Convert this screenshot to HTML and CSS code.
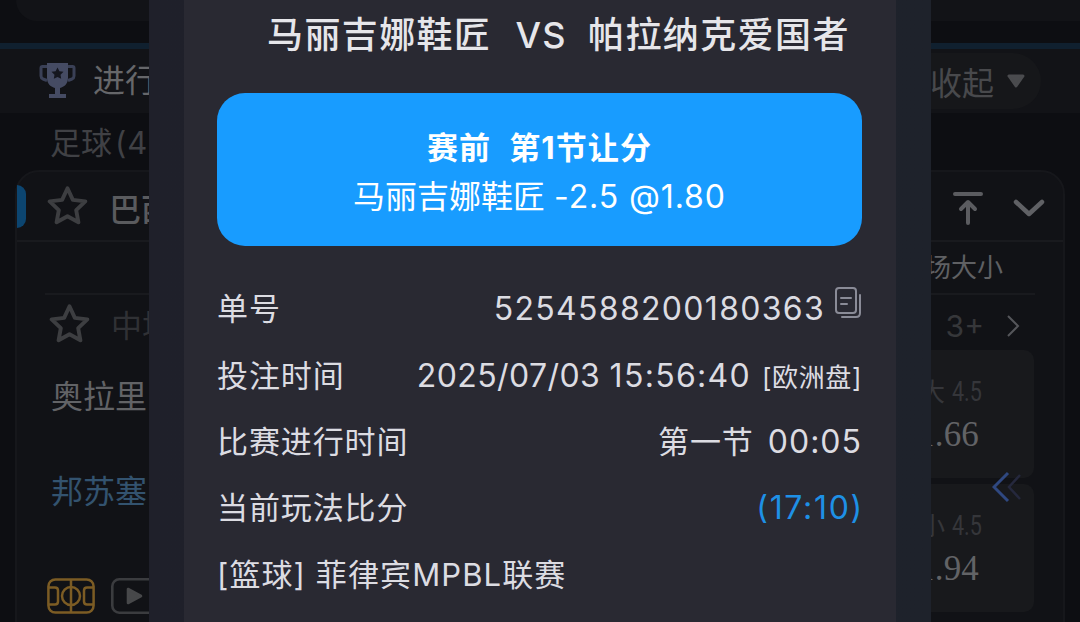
FILE: index.html
```html
<!DOCTYPE html>
<html lang="zh-CN">
  <head>
    <meta charset="UTF-8">
    <meta name="viewport" content="width=device-width, initial-scale=1.0">
    <title>注单详情</title>
    <link rel="stylesheet" href="styles.css">
  </head>
  <body>
    <div class="page">
      <div class="topbar"></div>
      <div class="section">
        <svg class="trophy" viewBox="0 0 38 38">
          <path d="M9 1h21v15c0 6-4 9-8 10v6h6v4H11v-4h6v-6c-4-1-8-4-8-10z" fill="#454b63"/>
          <path d="M9 4.500H4.500q-1.500 0-1.500 1.500v8q0 2 2 3l4 1.500M30 4.500h4.500q1.500 0 1.500 1.500v8q0 2-2 3l-4 1.500" fill="none" stroke="#3a4056" stroke-width="3"/>
          <path d="M19.500 5.500l1.900 3.700 4.100.6-3 2.900.7 4.100-3.700-1.900-3.700 1.900.7-4.100-3-2.900 4.100-.6z" fill="#15171f"/>
        </svg>
        <span class="section__title">进行</span>
        <div class="fold">收起
          <svg class="fold__arrow" viewBox="0 0 20 15"><path d="M3 2h14l-7 10z" fill="#4a4b4e" stroke="#4a4b4e" stroke-width="3" stroke-linejoin="round"/></svg>
        </div>
      </div>
      <div class="sport">足球<span class="sport__count">(4</span></div>

      <div class="card">
        <div class="league">
          <span class="league__mark"></span>
          <svg class="star" viewBox="2 2 36 35"><path d="M20 4l4.800 10.400 11.200 1.400-8.200 7.800 2 11L20 29.200 10.200 34.600l2-11L4 15.800l11.200-1.400z"/></svg>
          <span class="league__name">巴西</span>
          <div class="league__tools">
            <svg width="32" height="36" viewBox="0 0 32 36"><path d="M3 4h26M16 33V13M9 19l7-7 7 7" fill="none" stroke="#5b5c60" stroke-width="4" stroke-linecap="round" stroke-linejoin="round"/></svg>
            <svg width="32" height="20" viewBox="0 0 32 20"><path d="M3 4l13 12L29 4" fill="none" stroke="#606165" stroke-width="4.500" stroke-linecap="round" stroke-linejoin="round"/></svg>
          </div>
        </div>

        <div class="market">场大小</div>

        <div class="status">
          <svg class="star" viewBox="2 2 36 35"><path d="M20 4l4.800 10.400 11.200 1.400-8.200 7.800 2 11L20 29.200 10.200 34.600l2-11L4 15.800l11.200-1.400z"/></svg>
          <span class="status__time">中场</span>
          <span class="status__more">3+</span>
          <svg width="14" height="24" viewBox="0 0 14 24"><path d="M2 2l10 10L2 22" fill="none" stroke="#55565a" stroke-width="2"/></svg>
        </div>

        <div class="match">
          <div class="teams">
            <div class="team">奥拉里</div>
            <div class="team team--blue">邦苏塞</div>
            <div class="teams__icons">
              <svg width="48" height="36" viewBox="0 0 48 36" fill="none" stroke="#7c5c24" stroke-width="2.500">
                <rect x="1.400" y="1.400" width="45.200" height="33.200" rx="7"/>
                <path d="M24 1v34M2 9.500h6q3 0 3 3v11q0 3-3 3H2M46 9.500h-6q-3 0-3 3v11q0 3 3 3h6"/>
                <circle cx="24" cy="18" r="9"/>
              </svg>
              <svg width="48" height="36" viewBox="0 0 48 36" fill="none" stroke="#3b3c3f" stroke-width="2.600">
                <rect x="1.300" y="1.300" width="45.400" height="33.400" rx="7"/>
                <path d="M17 11v14l13-7z" fill="#47484a" stroke="#47484a" stroke-linejoin="round"/>
              </svg>
            </div>
          </div>
          <div class="odds">
            <div class="odd">
              <div class="odd__line">大 <span class="odd__num">4.5</span></div>
              <div class="odd__price">1.66</div>
            </div>
            <div class="odd">
              <div class="odd__line">小 <span class="odd__num">4.5</span></div>
              <div class="odd__price">1.94</div>
            </div>
          </div>
        </div>
      </div>
      <svg class="swipe" width="30" height="32" viewBox="0 0 30 32" fill="none">
        <path d="M16 2L2 16l14 14" stroke="#2f4880" stroke-width="3"/>
        <path d="M28 4L17 16l11 12" stroke="#25283d" stroke-width="2.500"/>
      </svg>
    </div>

    <div class="modal">
      <div class="ticket">
        <div class="ticket__title"><span>马丽吉娜鞋匠</span><span class="ticket__vs">VS</span><span>帕拉纳克爱国者</span></div>
        <div class="bet">
          <div class="bet__type"><span>赛前</span><span>第1节让分</span></div>
          <div class="bet__pick">马丽吉娜鞋匠 <span class="bet__odds">-2.5 @1.80</span></div>
        </div>
        <div class="row">
          <span class="row__label">单号</span>
          <span class="row__value row__value--id">5254588200180363</span>
          <svg class="copy" width="28" height="34" viewBox="0 0 28 34" fill="none" stroke="#8a8b97" stroke-width="2" stroke-linecap="round">
            <rect x="2" y="2" width="20" height="25" rx="3"/>
            <path d="M7 12h10M7 18h6M26 9v18q0 4-4 4H8"/>
          </svg>
        </div>
        <div class="row">
          <span class="row__label">投注时间</span>
          <span class="row__value row__value--date">2025/07/03 <span class="row__hour">15:56:40</span></span>
          <span class="row__note">[欧洲盘]</span>
        </div>
        <div class="row">
          <span class="row__label">比赛进行时间</span>
          <span class="row__period">第一节</span>
          <span class="row__value row__value--clock">00:05</span>
        </div>
        <div class="row">
          <span class="row__label">当前玩法比分</span>
          <span class="row__value row__value--score">(17:10)</span>
        </div>
        <div class="row">
          <span class="row__label row__label--league">[篮球] 菲律宾MPBL联赛</span>
        </div>
      </div>
    </div>
  </body>
</html>
```

FILE: styles.css
```css
* {
  box-sizing: border-box;
}

html,
body {
  margin: 0;
}

body {
  position: relative;
  width: 1080px;
  height: 622px;
  overflow: hidden;
  background: #0d0e12;
  font-family: Inter, 'Noto Sans CJK SC', sans-serif;
  font-size: 32px;
  white-space: nowrap;
}

svg {
  display: block;
  flex: none;
}

.page {
  height: 622px;
  overflow: hidden;
}

.topbar {
  height: 21px;
  margin: 0 0 22px 16px;
  border-radius: 0 0 0 22px;
  background: #121317;
}

.section {
  display: flex;
  align-items: center;
  height: 70px;
  padding: 0 39px 0 38px;
  border-top: 6px solid #10202f;
  background: #121317;
}

.trophy {
  width: 38px;
  height: 38px;
}

.section__title {
  margin-left: 17px;
  padding-bottom: 6px;
  color: #66676a;
}

.fold {
  display: flex;
  align-items: center;
  width: 140px;
  height: 56px;
  margin-left: auto;
  padding-left: 29px;
  border-radius: 28px;
  background: #16171a;
  color: #48494c;
}

.fold__arrow {
  width: 20px;
  height: 15px;
  margin-left: 12px;
}

.sport {
  height: 57px;
  padding: 2px 0 0 50px;
  color: #404145;
  font-size: 31px;
  line-height: 55px;
}

.sport__count {
  margin-left: 3px;
  letter-spacing: 1px;
}

.card {
  width: 1050px;
  height: 500px;
  margin-left: 15px;
  border: 2px solid #16171b;
  border-radius: 24px;
  background: #111216;
}

.league {
  display: flex;
  align-items: center;
  height: 70px;
  padding-right: 18px;
  border-bottom: 2px solid #191a1e;
}

.league__mark {
  width: 9px;
  height: 43px;
  border-radius: 0 9px 9px 0;
  background: #0c4570;
}

.star {
  width: 41px;
  height: 39px;
  fill: none;
  stroke: #3d3e41;
  stroke-width: 3.5;
  stroke-linejoin: round;
}

.league .star {
  margin: -1px 0 0 21px;
}

.league__name {
  margin-left: 21px;
  padding-top: 2px;
  color: #5a5b5e;
  font-weight: 500;
}

.league__tools {
  display: flex;
  align-items: center;
  gap: 29px;
  margin-left: auto;
  padding-top: 4px;
}

.market {
  height: 53px;
  margin: 0 28px;
  padding-right: 32px;
  border-bottom: 2px solid #191a1e;
  color: #5f6063;
  font-size: 26px;
  line-height: 51px;
  text-align: right;
}

.status {
  display: flex;
  align-items: center;
  height: 55px;
  padding: 6px 43px 0 32px;
}

.status .star {
  margin-top: -5px;
}

.status__time {
  margin-left: 21px;
  padding-bottom: 4px;
  color: #303135;
  font-size: 31px;
}

.status__more {
  margin: 0 22px 0 auto;
  color: #36373a;
  font-size: 30px;
}

.match {
  display: flex;
  justify-content: space-between;
  padding: 0 29px 0 30px;
}

.teams {
  padding-left: 4px;
}

.team {
  height: 95px;
  color: #626366;
  line-height: 94px;
}

.team--blue {
  color: #33536f;
}

.teams__icons {
  display: flex;
  gap: 16px;
  margin: 38px 0 0 -4px;
}

.odds {
  display: flex;
  flex-direction: column;
  gap: 6px;
}

.odd {
  width: 160px;
  height: 128px;
  padding: 24px 0 0 46px;
  border-radius: 10px;
  background: #18191c;
}

.odd__line {
  display: flex;
  gap: 7px;
  height: 36px;
  color: #35363a;
  font-size: 25px;
  line-height: 36px;
}

.odd__num {
  font-family: Roboto, sans-serif;
  font-size: 28px;
  transform: scaleX(0.77);
  transform-origin: left;
}

.odd__price {
  margin-left: -3px;
  color: #626366;
  font-family: 'Liberation Serif', serif;
  font-size: 35px;
  letter-spacing: 0.2px;
  line-height: 49px;
}

/* sits over the odds, hints at more markets */
.swipe {
  position: absolute;
  top: 471px;
  left: 992px;
}

.modal {
  position: absolute;
  top: 0;
  left: 149px;
  width: 782px;
  height: 622px;
  padding: 0 35px;
  background: linear-gradient(to right, #1f202a, #1e222b);
}

.ticket {
  height: 622px;
  padding: 0 34px 0 33px;
  background: #292932;
  color: #dcdce2;
}

.ticket__title {
  display: flex;
  height: 93px;
  padding-left: 50px;
  color: #e6e6ea;
  font-size: 36px;
  font-weight: 500;
  letter-spacing: 1.4px;
  line-height: 71px;
}

.ticket__vs {
  margin: 0 21px 0 24px;
}

.bet {
  height: 153px;
  margin-bottom: 29px;
  padding-top: 30px;
  border-radius: 28px;
  background: #189cff;
  color: #fff;
  text-align: center;
}

.bet__type {
  display: flex;
  justify-content: center;
  gap: 18px;
  font-size: 31px;
  font-weight: 700;
  letter-spacing: 1.1px;
  line-height: 49px;
}

.bet__pick {
  line-height: 50px;
}

.bet__odds {
  letter-spacing: 0.9px;
}

.row {
  display: flex;
  align-items: center;
  height: 66.4px;
}

.row__label {
  margin-right: auto;
  padding-bottom: 3px;
  font-size: 31px;
  letter-spacing: 0.9px;
}

.row__label--league {
  letter-spacing: 1.1px;
}

.row__value {
  padding-top: 1px;
  letter-spacing: 1px;
}

.row__value--id {
  letter-spacing: 1.3px;
}

.row__value--date {
  letter-spacing: 0.4px;
}

.row__hour {
  letter-spacing: 1.3px;
}

.row__note {
  margin-left: 11px;
  padding-top: 2px;
  font-size: 26px;
  letter-spacing: 0.6px;
}

.row__period {
  padding-bottom: 3px;
  font-size: 31px;
  letter-spacing: 0.9px;
}

.row__value--clock {
  margin-left: 14px;
}

.row__value--score {
  margin-right: -2px;
  color: #1e90e6;
  letter-spacing: 1.7px;
}

.copy {
  margin: -10px 0 0 9px;
}
```
